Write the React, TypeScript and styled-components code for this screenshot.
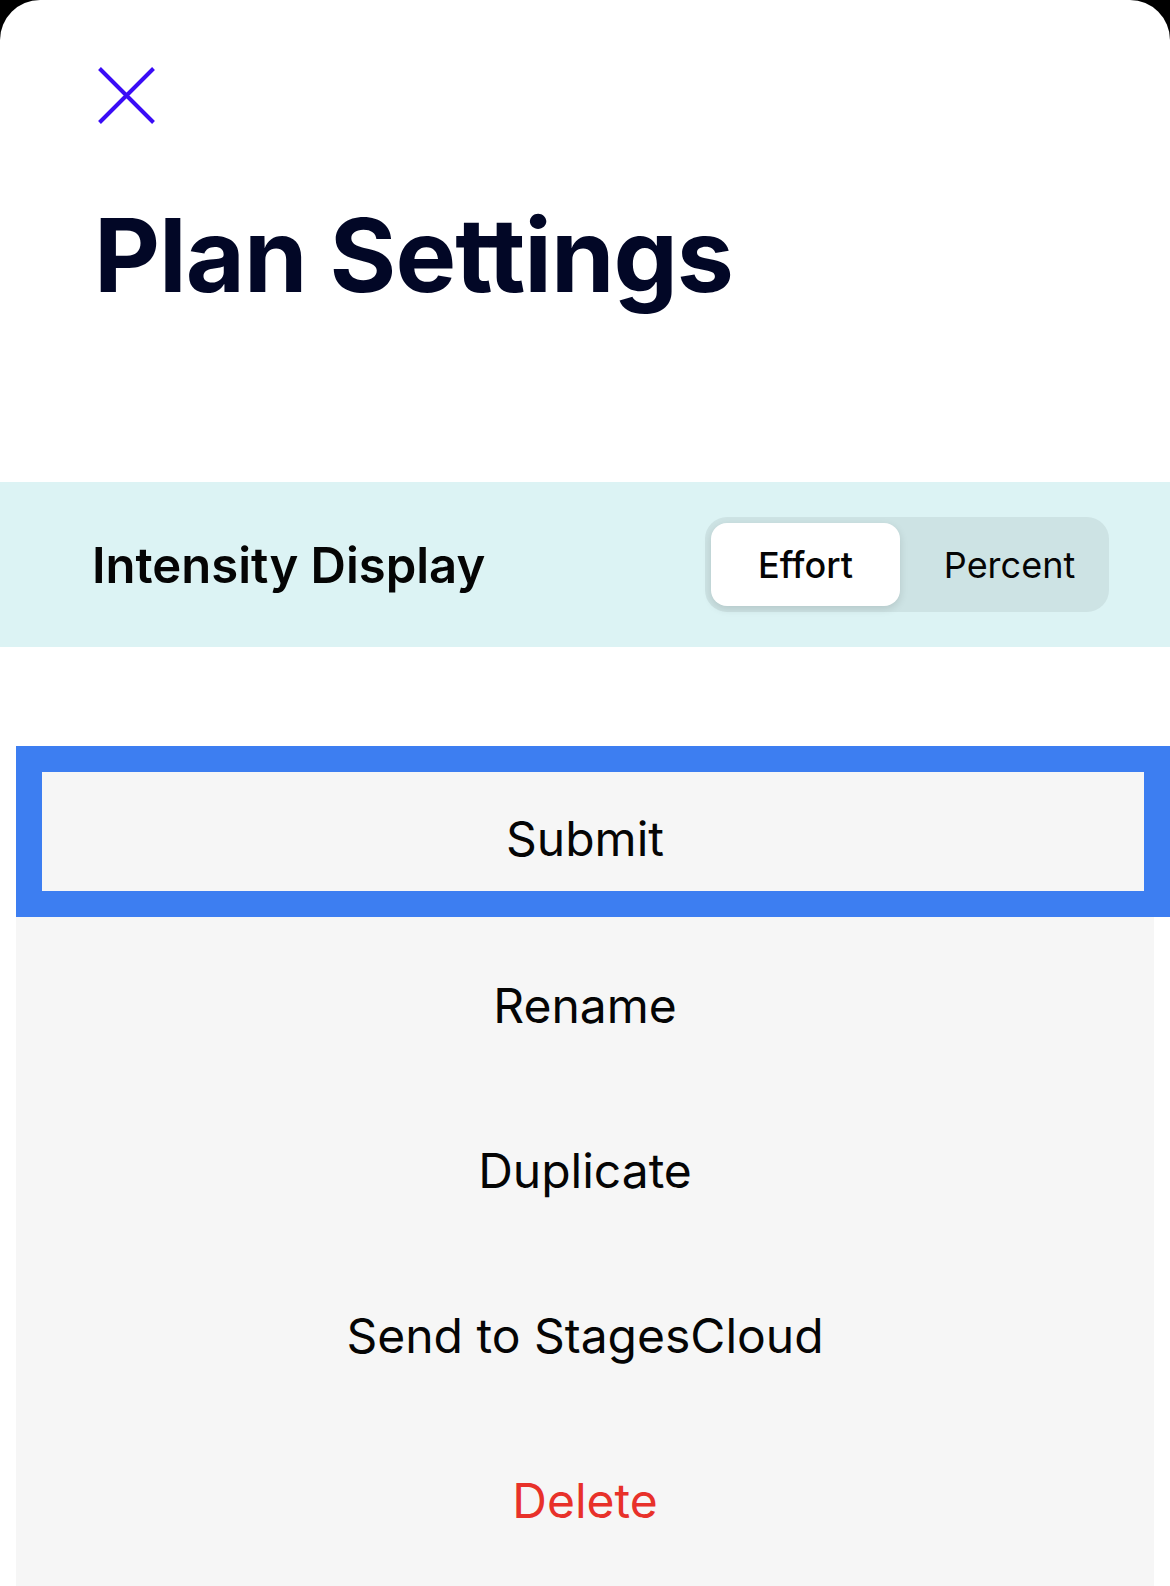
import { useState } from "react";
import styled, { createGlobalStyle } from "styled-components";

const GlobalStyle = createGlobalStyle`
  html, body {
    margin: 0;
    padding: 0;
    background: #000;
  }
  body {
    font-family: Inter, "Noto Sans", sans-serif;
  }
`;

const actions = ["Submit", "Rename", "Duplicate", "Send to StagesCloud", "Delete"];

export default function App() {
  const [mode, setMode] = useState<"effort" | "percent">("effort");

  return (
    <>
      <GlobalStyle />
      <Sheet>
        <Header>
          <CloseButton aria-label="Close">
            <svg width="57" height="57" viewBox="0 0 57 57">
              <path d="M1.5 1.5 L55.5 55.5 M55.5 1.5 L1.5 55.5" stroke="#3a0cf6" strokeWidth="4" />
            </svg>
          </CloseButton>
          <Title>Plan Settings</Title>
        </Header>

        <SettingRow>
          <SettingLabel>Intensity Display</SettingLabel>
          <Segmented>
            <Segment $active={mode === "effort"} onClick={() => setMode("effort")}>
              Effort
            </Segment>
            <Segment $active={mode === "percent"} $wide onClick={() => setMode("percent")}>
              Percent
            </Segment>
          </Segmented>
        </SettingRow>

        <ActionList>
          {actions.map((a, i) => (
            <ActionItem key={a} $focused={i === 0} $danger={a === "Delete"}>
              {a}
            </ActionItem>
          ))}
        </ActionList>
      </Sheet>
    </>
  );
}

const Sheet = styled.div`
  background: #fff;
  border-radius: 40px 40px 0 0;
  min-height: 1586px;
  overflow: hidden;
  display: flex;
  flex-direction: column;
`;

const Header = styled.div`
  padding: 67px 0 0 96px;
  height: 482px;
  box-sizing: border-box;
  flex-shrink: 0;
`;

const CloseButton = styled.button`
  display: block;
  width: 57px;
  height: 57px;
  margin-left: 2px;
  padding: 0;
  border: none;
  background: none;
  cursor: pointer;
  svg {
    display: block;
  }
`;

const Title = styled.h1`
  margin: 80px 0 0 -2px;
  font-size: 102px;
  line-height: 1;
  font-weight: 700;
  letter-spacing: -1px;
  color: #020726;
`;

const SettingRow = styled.div`
  height: 165px;
  flex-shrink: 0;
  background: #dcf3f4;
  display: flex;
  align-items: center;
  justify-content: space-between;
  padding: 0 61px 0 92px;
  box-sizing: border-box;
`;

const SettingLabel = styled.div`
  font-size: 49px;
  font-weight: 600;
  color: #050505;
  padding-top: 2px;
`;

const Segmented = styled.div`
  display: flex;
  width: 404px;
  height: 95px;
  padding: 6px;
  box-sizing: border-box;
  background: #cde3e4;
  border-radius: 22px;
`;

const Segment = styled.button<{ $active?: boolean; $wide?: boolean }>`
  flex: ${(p) => (p.$wide ? "1" : "0 0 189px")};
  border: none;
  border-radius: 16px;
  background: ${(p) => (p.$active ? "#fff" : "transparent")};
  box-shadow: ${(p) => (p.$active ? "0 3px 8px rgba(0, 0, 0, 0.12)" : "none")};
  font-family: Inter, "Noto Sans", sans-serif;
  font-size: 36px;
  font-weight: ${(p) => (p.$active ? 500 : 400)};
  color: #050505;
  padding: ${(p) => (p.$wide ? "0 0 0 16px" : "0")};
  cursor: pointer;
`;

const ActionList = styled.div`
  margin: 99px 16px 0;
  background: #f6f6f6;
  flex: 1;
  display: flex;
  flex-direction: column;
`;

const ActionItem = styled.button<{ $focused?: boolean; $danger?: boolean }>`
  height: ${(p) => (p.$focused ? "171px" : "165px")};
  padding: ${(p) => (p.$focused ? "13px 16px 0 0" : "12px 0 0")};
  border: none;
  background: #f6f6f6;
  font-family: Inter, "Noto Sans", sans-serif;
  font-size: 48px;
  font-weight: 400;
  color: ${(p) => (p.$danger ? "#e8312a" : "#050505")};
  cursor: pointer;
  outline: ${(p) => (p.$focused ? "26px solid #3d7ef1" : "none")};
  outline-offset: -26px;
  margin-right: ${(p) => (p.$focused ? "-16px" : "0")};
  flex-shrink: 0;
`;
